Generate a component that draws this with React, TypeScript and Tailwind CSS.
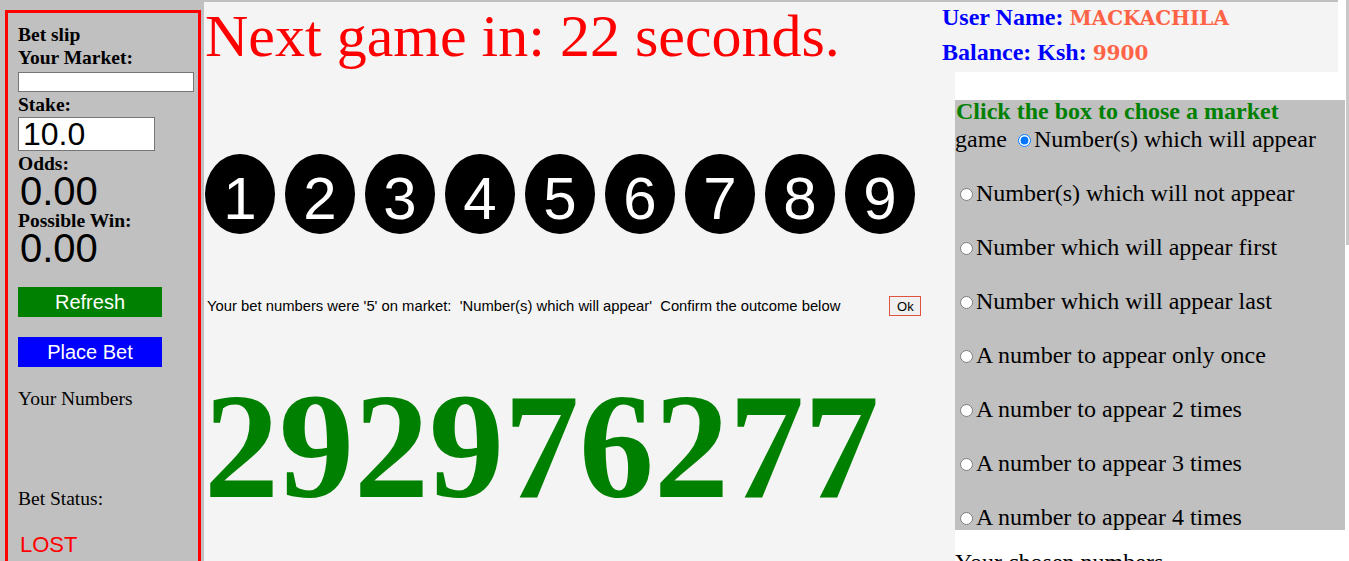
import React from "react";

const options = [
  "Number(s) which will not appear",
  "Number which will appear first",
  "Number which will appear last",
  "A number to appear only once",
  "A number to appear 2 times",
  "A number to appear 3 times",
  "A number to appear 4 times",
];

export default function App() {
  return (
    <div className="relative flex w-[1349px] h-[561px] overflow-hidden bg-[#c0c0c0] font-['Liberation_Serif','Times_New_Roman',serif] text-black">
      {/* Left bet slip */}
      <div className="w-[204px] shrink-0 pl-[5px] pr-[3px] pt-[10px]">
        <div className="h-[600px] border-[3px] border-[#ff0000] bg-[#c0c0c0] pl-[10px] pt-[10px]">
          <div className="text-[19.5px] leading-[23px] font-bold">Bet slip</div>
          <div className="text-[19.5px] leading-[23px] font-bold">Your Market:</div>
          <div className="mt-[3px] h-[20px] w-[176px] border border-[#767676] bg-white" />
          <div className="mt-px text-[19.5px] leading-[23px] font-bold">Stake:</div>
          <div className="mt-px flex h-[34px] w-[137px] items-center border border-[#767676] bg-white pl-[4px] font-['Liberation_Sans',Arial,sans-serif] text-[32px] leading-none">
            10.0
          </div>
          <div className="mt-px text-[19.5px] leading-[23px] font-bold">Odds:</div>
          <div className="pl-[2px] font-['Liberation_Sans',Arial,sans-serif] text-[40px] leading-[32px]">0.00</div>
          <div className="mt-[2px] text-[19.5px] leading-[23px] font-bold">Possible Win:</div>
          <div className="pl-[2px] font-['Liberation_Sans',Arial,sans-serif] text-[40px] leading-[32px]">0.00</div>
          <div className="mt-[23px] flex h-[30px] w-[144px] items-center justify-center bg-[#008000] font-['Liberation_Sans',Arial,sans-serif] text-[20px] leading-none text-white">
            Refresh
          </div>
          <div className="mt-[20px] flex h-[30px] w-[144px] items-center justify-center bg-[#0000ff] font-['Liberation_Sans',Arial,sans-serif] text-[20px] leading-none text-white">
            Place Bet
          </div>
          <div className="mt-[20px] text-[19.5px] leading-[23px]">Your Numbers</div>
          <div className="mt-[77px] text-[19.5px] leading-[23px]">Bet Status:</div>
          <div className="mt-[22px] pl-[2px] font-['Liberation_Sans',Arial,sans-serif] text-[22px] leading-[25px] text-[#ff0000]">
            LOST
          </div>
        </div>
      </div>

      {/* Center game area */}
      <div className="mt-[2px] w-[733px] shrink-0 bg-[#f4f4f4]">
        <div className="pl-px text-[60px] leading-[69px] text-[#ff0000]">Next game in: 22 seconds.</div>
        <div className="mt-[83px] flex gap-[10px] pl-px">
          {[1, 2, 3, 4, 5, 6, 7, 8, 9].map((n) => (
            <div
              key={n}
              className="flex h-[80px] w-[70px] items-center justify-center rounded-[50%] bg-black pt-[10px] font-['Liberation_Sans',Arial,sans-serif] text-[60px] leading-none text-white"
            >
              {n}
            </div>
          ))}
        </div>
        <div className="mt-[62px] flex h-[20px] items-center pl-[3px] font-['Liberation_Sans',Arial,sans-serif]">
          <span className="whitespace-pre text-[14.8px] leading-none">
            Your bet numbers were '5' on market:  'Number(s) which will appear'  Confirm the outcome below
          </span>
          <div className="ml-[49px] flex h-[20px] w-[32px] items-center justify-center border border-[#e0533f] bg-[#f0f0f0] text-[13px] leading-none">
            Ok
          </div>
        </div>
        <div className="mt-[55px] text-[150px] font-bold leading-none text-[#008000]">292976277</div>
      </div>

      {/* Right panel */}
      <div className="flex w-[412px] shrink-0 flex-col bg-white">
        <div className="w-[401px] bg-[#c0c0c0] pt-[2px]">
          <div className="h-[70px] bg-[#f4f4f4] pl-[5px] text-[24px] font-bold text-[#0000ff]">
            <div className="leading-[31px]">
              User Name:{" "}
              <span className="font-['DejaVu_Serif',serif] text-[20px] font-bold leading-none text-[#ff6347]">MACKACHILA</span>
            </div>
            <div className="leading-[39px]">
              Balance: Ksh:{" "}
              <span className="font-['DejaVu_Serif',serif] text-[20px] font-bold leading-none text-[#ff6347]">9900</span>
            </div>
          </div>
        </div>
        <div className="flex flex-1">
          <div className="w-[18px] bg-[#f4f4f4]" />
          <div className="w-[390px] pt-[28px]">
            <div className="h-[430px] bg-[#c0c0c0]">
              <div className="pl-px text-[24px] font-bold leading-[22px] text-[#008000]">Click the box to chose a market</div>
              <div className="mt-[4px] text-[24px] leading-[27px]">
                <div>
                  game{" "}
                  <input type="radio" name="market" defaultChecked className="mt-[3px] mr-[3px] ml-[5px] h-[13px] w-[13px] align-baseline" />
                  Number(s) which will appear
                </div>
                {options.map((o) => (
                  <React.Fragment key={o}>
                    <div className="h-[27px]" />
                    <div>
                      <input type="radio" name="market" className="mt-[3px] mr-[3px] ml-[5px] h-[13px] w-[13px] align-baseline" />
                      {o}
                    </div>
                  </React.Fragment>
                ))}
              </div>
            </div>
            <div className="mt-[19px] text-[24px] leading-[27px]">Your chosen numbers</div>
          </div>
        </div>
      </div>

      <div className="absolute right-0 top-0 h-[245px] w-[3px] bg-[#c8c8c8]" />
    </div>
  );
}
